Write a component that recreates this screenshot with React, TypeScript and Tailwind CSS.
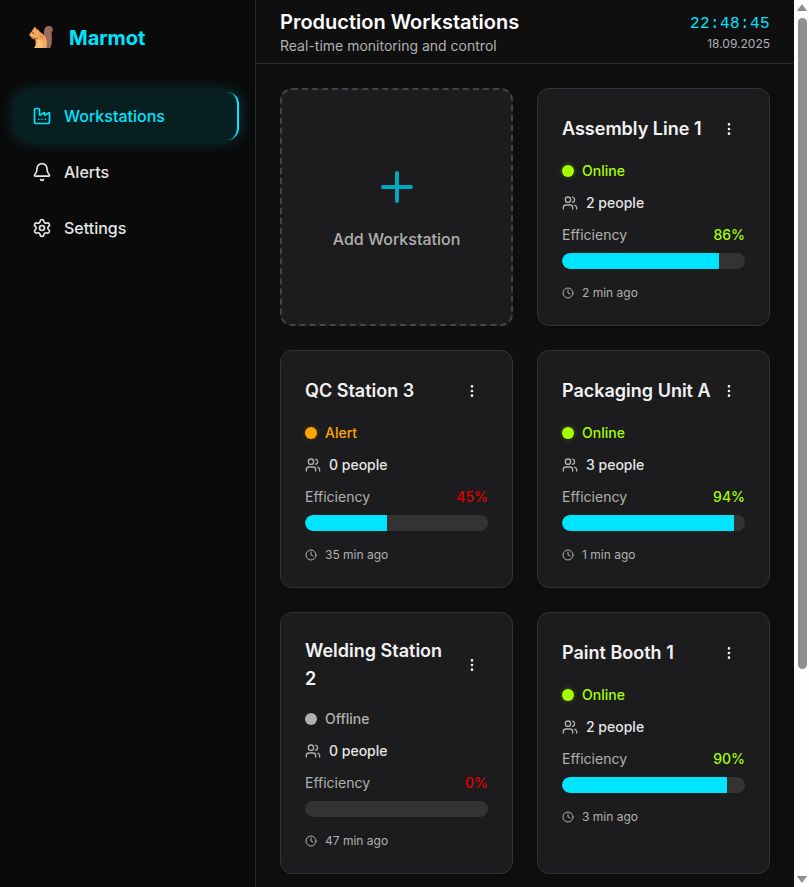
import { Bell, Clock, EllipsisVertical, Factory, Plus, Settings, Users } from 'lucide-react'

type Station = {
  name: string
  status: 'Online' | 'Alert' | 'Offline'
  people: number
  efficiency: number
  updated: string
}

const stations: Station[] = [
  { name: 'Assembly Line 1', status: 'Online', people: 2, efficiency: 86, updated: '2 min ago' },
  { name: 'QC Station 3', status: 'Alert', people: 0, efficiency: 45, updated: '35 min ago' },
  { name: 'Packaging Unit A', status: 'Online', people: 3, efficiency: 94, updated: '1 min ago' },
  { name: 'Welding Station 2', status: 'Offline', people: 0, efficiency: 0, updated: '47 min ago' },
  { name: 'Paint Booth 1', status: 'Online', people: 2, efficiency: 90, updated: '3 min ago' },
]

function Squirrel() {
  return (
    <svg width="26" height="26" viewBox="0 0 26 26" className="shrink-0">
      <path d="M18 23 L22 23 C24.5 20 24 12 23.5 7.5 C25.5 6 25.5 1.5 21.5 1 C17.5 0.5 15.5 4 16 9 C16.5 14 19 18 18 23 Z" fill="#9c6a5c" />
      <path d="M7 1.5 L8.5 4 C10 4.5 11 5.5 11.5 6.5 C14 8 18 11 18.5 15 C19 18 19 21 18.5 23 L6 23 C7.5 21 8 19 7.5 16 L7 13 C5 13 3.5 12.5 2.5 11.5 C1.5 10.5 1 9.5 1.5 9 C2.5 8 3.5 7 4 6 C4.5 4.5 6 3.5 7 1.5 Z" fill="#f6a75f" />
      <path d="M9 15 C11 14 14 15 15 18 C15.5 20 15 22 14 23 L7 23 C8.5 21 9 18 9 15 Z" fill="#fbbf78" />
      <path d="M3.5 13 C5.5 14 8 14 10 13" stroke="#b9743c" strokeWidth="1.2" fill="none" />
      <path d="M12.5 8.5 L16 13 M11.5 10 L14.5 14.5" stroke="#c97f45" strokeWidth="0.9" fill="none" />
      <circle cx="5.2" cy="8" r="0.8" fill="#4a2c1a" />
    </svg>
  )
}

function NavItem({ icon, label, active }: { icon: React.ReactNode; label: string; active?: boolean }) {
  return (
    <a
      className={
        active
          ? 'flex h-12 items-center gap-3 rounded-xl border-r-2 border-[#00e5ff] bg-[#00e5ff1a] px-4 text-[#00e5ff] shadow-[0_0_16px_rgba(0,229,255,0.25)]'
          : 'flex h-12 items-center gap-3 rounded-xl px-4 text-[#e5e5e5]'
      }
    >
      {icon}
      <span className="text-base font-medium">{label}</span>
    </a>
  )
}

function StatusRow({ status }: { status: Station['status'] }) {
  const dot =
    status === 'Online'
      ? 'bg-[#a6ff00] shadow-[0_0_4px_rgba(166,255,0,0.35)]'
      : status === 'Alert'
        ? 'bg-[#ffa500] shadow-[0_0_4px_rgba(255,165,0,0.3)]'
        : 'bg-[#b0b0b0]'
  const text = status === 'Online' ? 'text-[#a6ff00]' : status === 'Alert' ? 'text-[#ffa500]' : 'text-[#b0b0b0]'
  return (
    <div className="mb-3 flex h-5 items-center gap-2">
      <span className={`size-3 rounded-full ${dot}`} />
      <span className={`text-sm font-medium ${text}`}>{status}</span>
    </div>
  )
}

function StationCard({ station }: { station: Station }) {
  const high = station.efficiency >= 70
  return (
    <div className="rounded-xl border border-[#333333] bg-[#1c1c1e] p-6 shadow-lg">
      <div className="mb-4 flex items-center justify-between">
        <h3 className="text-lg leading-7 font-semibold text-[#f2f2f2]">{station.name}</h3>
        <button className="shrink-0 p-2 text-[#f2f2f2]">
          <EllipsisVertical size={16} />
        </button>
      </div>
      <StatusRow status={station.status} />
      <div className="mb-3 flex h-5 items-center gap-2 text-[#e5e5e5]">
        <Users size={16} className="text-[#b0b0b0]" />
        <span className="text-sm font-medium">{station.people} people</span>
      </div>
      <div className="mb-2 flex items-center justify-between text-sm">
        <span className="text-[#b0b0b0]">Efficiency</span>
        <span className={high ? 'font-medium text-[#a6ff00]' : 'font-medium text-[#e00000]'}>{station.efficiency}%</span>
      </div>
      <div className="h-4 overflow-hidden rounded-full bg-[#333333]">
        <div className="h-full rounded-l-full bg-[#00e5ff]" style={{ width: `${station.efficiency}%` }} />
      </div>
      <div className="mt-4 flex items-center gap-2 text-xs text-[#b0b0b0]">
        <Clock size={12} />
        <span>{station.updated}</span>
      </div>
    </div>
  )
}

// the browser hides native scrollbars when photographed, so this one is drawn
function Scrollbar() {
  return (
    <div className="flex w-[15px] shrink-0 flex-col items-center bg-[#fdfdfd] pl-[1px]">
      <svg width="10" height="7" viewBox="0 0 10 7" className="mt-[4px] shrink-0">
        <path d="M5 0 L10 7 L0 7 Z" fill="#8f8f8f" />
      </svg>
      <div className="mt-[7px] h-[651px] w-[9px] rounded-full bg-[#8f8f8f]" />
      <svg width="10" height="7" viewBox="0 0 10 7" className="mt-auto mb-[4px] shrink-0">
        <path d="M0 0 L10 0 L5 7 Z" fill="#8f8f8f" />
      </svg>
    </div>
  )
}

export default function App() {
  return (
    <div className="flex h-screen bg-[#0f0f10] font-['Inter',sans-serif]">
      <aside className="w-64 shrink-0 border-r border-[#2a2a2a] bg-[#0a0a0a]">
        <div className="flex h-[76px] items-center gap-[15px] pl-7">
          <Squirrel />
          <span className="text-xl font-bold text-[#00e5ff]">Marmot</span>
        </div>
        <nav className="flex flex-col gap-2 px-4 pt-4">
          <NavItem active icon={<Factory size={20} />} label="Workstations" />
          <NavItem icon={<Bell size={20} />} label="Alerts" />
          <NavItem icon={<Settings size={20} />} label="Settings" />
        </nav>
      </aside>
      <main className="min-w-0 flex-1 overflow-hidden">
        <header className="flex h-16 items-center justify-between border-b border-[#2a2a2a] bg-[#0f0f10] px-6">
          <div>
            <h1 className="text-xl font-semibold text-white">Production Workstations</h1>
            <p className="text-sm text-[#b0b0b0]">Real-time monitoring and control</p>
          </div>
          <div className="text-right">
            <div className="font-['Liberation_Mono',monospace] text-base tracking-wide text-[#00e5ff]">22:48:45</div>
            <div className="text-xs text-[#b0b0b0]">18.09.2025</div>
          </div>
        </header>
        <div className="grid grid-cols-2 gap-6 p-6">
          <button className="flex flex-col items-center justify-center rounded-xl border-2 border-dashed border-[#444444] bg-[#1c1c1e]">
            <Plus size={48} className="mb-4 text-[#00a9bd]" />
            <span className="font-medium text-[#b0b0b0]">Add Workstation</span>
          </button>
          {stations.map((s) => (
            <StationCard key={s.name} station={s} />
          ))}
        </div>
      </main>
      <Scrollbar />
    </div>
  )
}
